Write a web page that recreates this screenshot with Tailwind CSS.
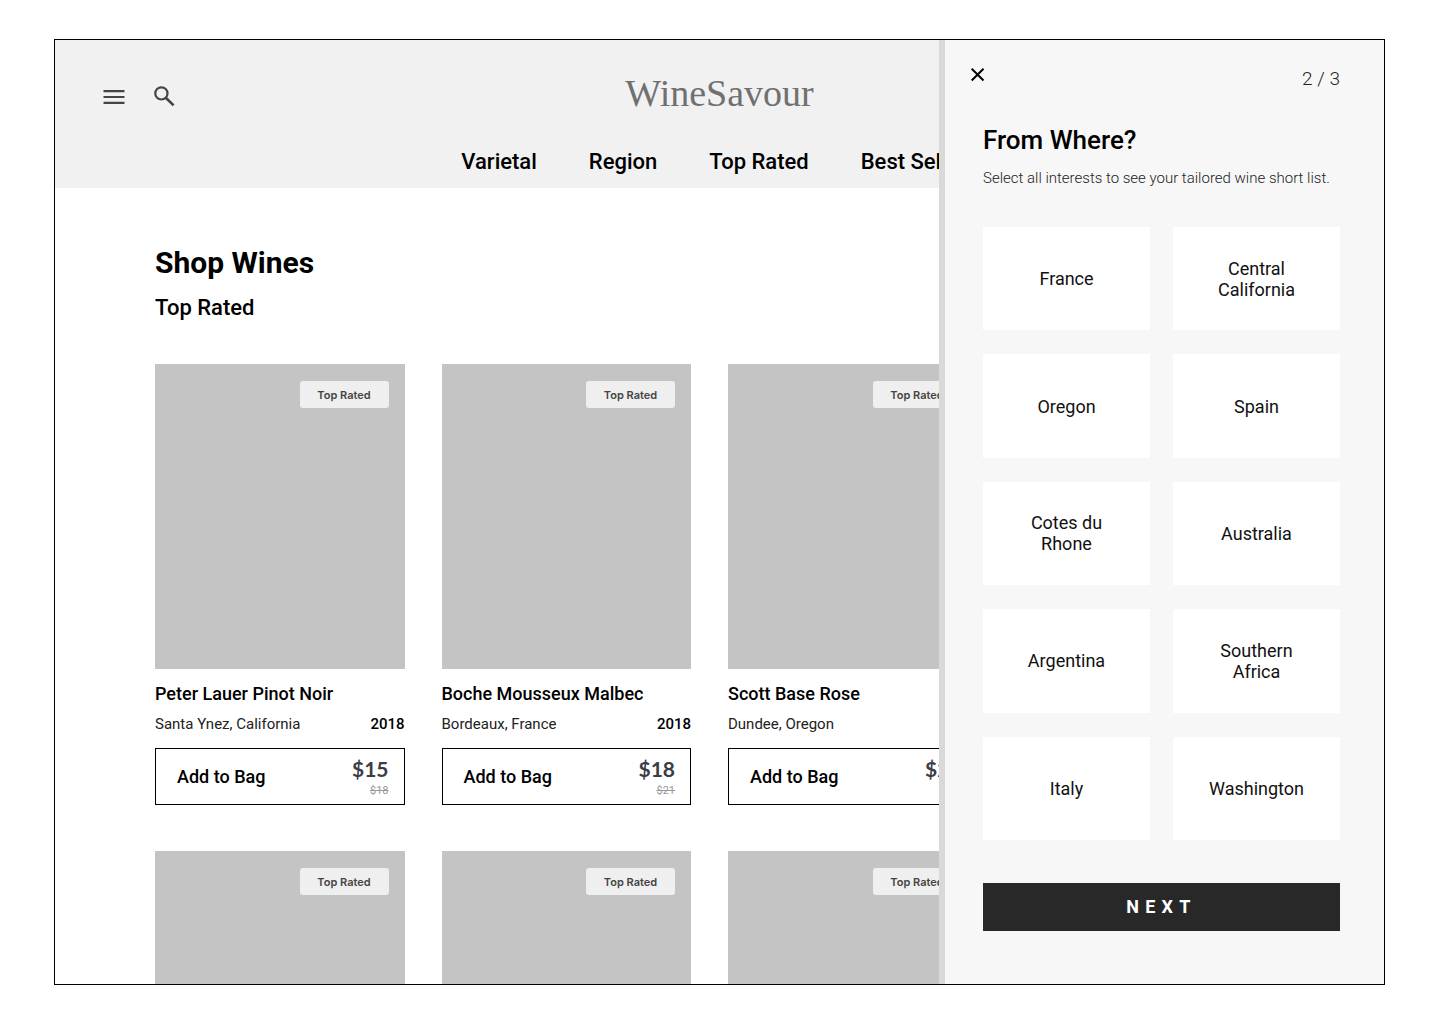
<!DOCTYPE html>
<html lang="en">
<head>
    <meta charset="UTF-8">
    <meta name="viewport" content="width=device-width, initial-scale=1.0">
    <title>WineSavour</title>
    <script src="https://cdn.jsdelivr.net/npm/@tailwindcss/browser@4"></script>
</head>
<body class="bg-white text-black font-[Roboto,sans-serif] h-screen pt-[39px] pb-[39px] pl-[54px] pr-[55px]">
    <div class="relative h-full border border-black overflow-hidden">

        <!-- Header -->
        <header class="bg-[#f1f1f1] h-[148px] pt-[29px]">
            <div class="grid grid-cols-[1fr_auto_1fr] items-center px-12">
                <div class="flex items-center gap-7">
                    <button type="button" aria-label="Menu" class="w-[22px] h-6 text-[#444]">
                        <svg class="w-[22px] h-6" viewBox="0 0 22 24" fill="none" stroke="currentColor" stroke-width="2.2">
                            <path d="M0.5 6.2H21.5M0.5 12H21.5M0.5 17.8H21.5"/>
                        </svg>
                    </button>
                    <button type="button" aria-label="Search" class="w-6 h-6 text-[#444]">
                        <svg class="w-6 h-6" viewBox="0 0 24 24" fill="none" stroke="currentColor" stroke-width="2.2">
                            <circle cx="8.4" cy="8.4" r="6.1"/>
                            <path d="M12.8 12.8L20.6 20.4" stroke-width="2.6"/>
                        </svg>
                    </button>
                </div>
                <a href="#" class="pb-2 font-['Liberation_Serif',serif] text-[38px] leading-[48px] text-[#707070]">WineSavour</a>
                <div></div>
            </div>
            <nav class="flex justify-center gap-[52px] mt-6 text-[22px] leading-[26px] font-medium">
                <a href="#">Varietal</a>
                <a href="#">Region</a>
                <a href="#">Top Rated</a>
                <a href="#">Best Sellers</a>
            </nav>
        </header>

        <!-- Shop -->
        <main class="pl-[100px] pr-[120px] pt-[57px]">
            <h1 class="text-[30px] leading-9 font-bold">Shop Wines</h1>
            <h2 class="text-[22px] leading-[26px] font-medium mt-[14px]">Top Rated</h2>
            <div id="wineList" class="grid grid-cols-4 gap-x-[37px] gap-y-[46px] mt-[43px]"></div>
        </main>

        <!-- Region quiz panel -->
        <aside class="absolute inset-y-0 right-0 w-[445px] bg-[#f7f7f7] border-l-6 border-[#d9d9d9] pl-[38px] pr-[44px]">
            <div class="flex items-start justify-between pt-6">
                <button type="button" aria-label="Close" class="-ml-4 w-5 h-5">
                    <svg class="w-5 h-5" viewBox="0 0 20 20" fill="none" stroke="currentColor" stroke-width="2">
                        <path d="M4.7 4.7L16.5 16.5M16.5 4.7L4.7 16.5"/>
                    </svg>
                </button>
                <span class="text-[19px] leading-[30px] font-light text-[#222]">2 / 3</span>
            </div>
            <h2 class="text-[26px] leading-8 font-medium mt-[30px]">From Where?</h2>
            <p class="text-[15px] leading-5 font-light text-[#222] mt-3 whitespace-nowrap">Select all interests to see your tailored wine short list.</p>
            <form>
                <div id="regionList" class="grid grid-cols-2 grid-rows-5 gap-x-[23px] gap-y-6 h-[613px] mt-[39px]"></div>
                <button type="button" class="w-full h-12 mt-[43px] bg-[#282828] text-white text-lg font-bold tracking-[0.35em]">NEXT</button>
            </form>
        </aside>
    </div>

    <script>
        const wines = [
            { name: 'Peter Lauer Pinot Noir', place: 'Santa Ynez, California', year: 2018, price: 15, was: 18 },
            { name: 'Boche Mousseux Malbec', place: 'Bordeaux, France', year: 2018, price: 18, was: 21 },
            { name: 'Scott Base Rose', place: 'Dundee, Oregon', year: 2018, price: 22, was: 25 }
        ];

        const regions = [
            'France', 'Central California', 'Oregon', 'Spain', 'Cotes du Rhone',
            'Australia', 'Argentina', 'Southern Africa', 'Italy', 'Washington'
        ];

        // Create wine card
        function createWineCard(wine, index) {
            // First card of each row goes back to column one
            const column = index % wines.length === 0 ? 'col-start-1' : '';
            return `
                <article class="${column}">
                    <div class="h-[305px] bg-[#c4c4c4] flex items-start justify-end pt-[17px] pr-4">
                        <span class="w-[89px] h-[27px] rounded-[3px] bg-[#efefef] text-center font-[Inter,sans-serif] text-[11px] leading-[29px] font-semibold text-[#444]">Top Rated</span>
                    </div>
                    <h3 class="text-lg leading-6 font-medium mt-[13px] whitespace-nowrap">${wine.name}</h3>
                    <div class="flex justify-between text-[15px] leading-5 mt-2">
                        <span class="text-[#222]">${wine.place}</span>
                        <span class="font-medium">${wine.year}</span>
                    </div>
                    <button type="button" class="w-full h-[57px] mt-[14px] pl-[21px] pr-[15px] border border-black flex items-center justify-between">
                        <span class="text-lg leading-6 font-medium">Add to Bag</span>
                        <span class="text-right">
                            <span class="block font-[Lato,sans-serif] text-[21px] leading-7 font-bold text-[#3c3c46]">$${wine.price}</span>
                            <s class="block text-[11px] leading-4 text-[#999]">$${wine.was}</s>
                        </span>
                    </button>
                </article>
            `;
        }

        // Create region tile
        function createRegionTile(region) {
            return `
                <label class="relative flex items-center justify-center bg-white px-9 text-center text-lg leading-[21px] text-[#111] has-checked:ring-2">
                    <input type="checkbox" name="region" value="${region}" class="sr-only">
                    <span>${region}</span>
                </label>
            `;
        }

        document.getElementById('wineList').innerHTML = [...wines, ...wines].map(createWineCard).join('');
        document.getElementById('regionList').innerHTML = regions.map(createRegionTile).join('');
    </script>
</body>
</html>
